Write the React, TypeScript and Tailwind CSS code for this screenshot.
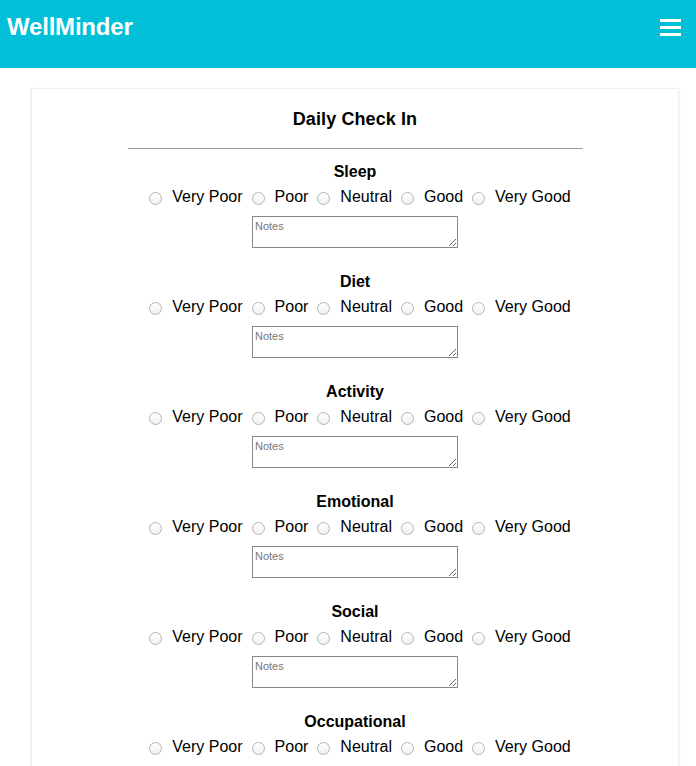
import { useState } from "react";

const areas = ["Sleep", "Diet", "Activity", "Emotional", "Social", "Occupational"];
const levels = ["Very Poor", "Poor", "Neutral", "Good", "Very Good"];

function Section({ name }: { name: string }) {
  const [val, setVal] = useState<string | null>(null);
  return (
    <div className="flex flex-col items-center">
      <h3 className="h-[18px] leading-[18px] text-[16px] font-bold text-black">{name}</h3>
      <div className="mt-[7px] ml-[10px] flex items-center h-[18px] text-[16px] leading-[18px] text-black">
        {levels.map((l, i) => (
          <label key={l} className={`flex items-center ${i > 0 ? "ml-[9px]" : ""}`}>
            <input
              type="radio"
              name={name}
              checked={val === l}
              onChange={() => setVal(l)}
              className="appearance-none w-[13px] h-[13px] rounded-full border border-[#b4b4b4] bg-gradient-to-b from-white to-[#f0f0f0] mt-[2px] checked:border-[#3b99fc] checked:bg-[#3b99fc]"
            />
            <span className="ml-[10px]">{l}</span>
          </label>
        ))}
      </div>
      <textarea
        placeholder="Notes"
        className="mt-[10px] w-[206px] h-[32px] border border-[#888] px-[2px] pt-[3px] pb-0 text-[11px] leading-[13px] placeholder:text-[#777] resize-y outline-none"
      />
    </div>
  );
}

export default function App() {
  return (
    <div className="min-h-screen bg-white font-['Liberation_Sans',Arial,sans-serif]">
      {/* Top bar */}
      <header className="h-[68px] bg-[#00bfd6] flex items-start justify-between pl-[7px] pr-[15px]">
        <h1 className="mt-[13px] text-[24px] leading-[28px] font-bold text-white tracking-[-0.2px]">WellMinder</h1>
        <button className="mt-[19px] flex flex-col gap-[4px]" aria-label="menu">
          <span className="block w-[21px] h-[3px] bg-white" />
          <span className="block w-[21px] h-[3px] bg-white" />
          <span className="block w-[21px] h-[3px] bg-white" />
        </button>
      </header>

      <div className="px-[31px] pt-[20px] pr-[17px]">
        <div className="bg-white border border-[#eeeeee] shadow-[0_1px_3px_rgba(0,0,0,0.08)] pt-[19px] pb-[40px]">
          <h2 className="text-center text-[18px] leading-[22px] font-bold text-black tracking-[0.1px]">Daily Check In</h2>
          <hr className="mx-auto mt-[18px] w-[455px] border-t border-[#999]" />
          <div className="mt-[14px] flex flex-col gap-[25px]">
            {areas.map((a) => (
              <Section key={a} name={a} />
            ))}
          </div>
        </div>
      </div>
    </div>
  );
}
